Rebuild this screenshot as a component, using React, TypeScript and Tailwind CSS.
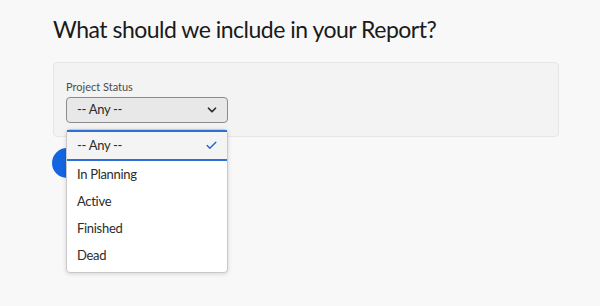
import { Check, ChevronDown } from "lucide-react";

const options = ["-- Any --", "In Planning", "Active", "Finished", "Dead"];

export default function App() {
  return (
    <div
      className="w-[600px] h-[306px] bg-[#f8f8f8] pl-[53px] pr-[41px] pt-[13px] overflow-hidden"
      style={{ fontFamily: 'Lato, "Noto Sans", sans-serif' }}
    >
      <h1 className="text-[23px] leading-[32px] tracking-[-0.5px] text-[#1a1a1a]">
        What should we include in your Report?
      </h1>

      <div className="mt-[17px] bg-[#f3f3f3] border border-[#e6e6e6] rounded-[4px] px-[12px] pt-[17px] pb-[13px]">
        <div className="text-[11px] leading-[14px] text-[#4b4b4b]">Project Status</div>
        <div className="relative mt-[3px] w-[162px]">
          <button className="w-full h-[26px] flex items-center justify-between pl-[10px] pr-[8px] bg-[#e8e8e8] border border-[#8c8c8c] rounded-[4px] text-[13px] tracking-[-0.3px] text-[#2c2c2c]">
            <span>-- Any --</span>
            <ChevronDown size={14} strokeWidth={3} className="text-[#2c2c2c]" />
          </button>

          <div className="absolute left-0 top-full mt-[6px] w-[162px] bg-white border border-[#c9c9c9] rounded-[4px] shadow-[0_1px_4px_rgba(0,0,0,0.15)] pb-[3px] z-10 text-[13px] tracking-[-0.3px] text-[#2c2c2c]">
            {options.map((o, i) =>
              i === 0 ? (
                <div
                  key={o}
                  className="h-[31px] flex items-center justify-between pl-[10px] pr-[9px] bg-[#f4f4f4] border-t-2 border-b-2 border-[#2d6fd6]"
                >
                  <span>{o}</span>
                  <Check size={13} strokeWidth={2.5} className="text-[#1a64d6]" />
                </div>
              ) : (
                <div key={o} className="h-[27px] flex items-center pl-[10px]">
                  {o}
                </div>
              )
            )}
          </div>
        </div>
      </div>

      <button
        aria-label="Create Report"
        className="mt-[11px] h-[30px] w-[130px] rounded-full bg-[#1465e0] -ml-[1px]"
      />
    </div>
  );
}
